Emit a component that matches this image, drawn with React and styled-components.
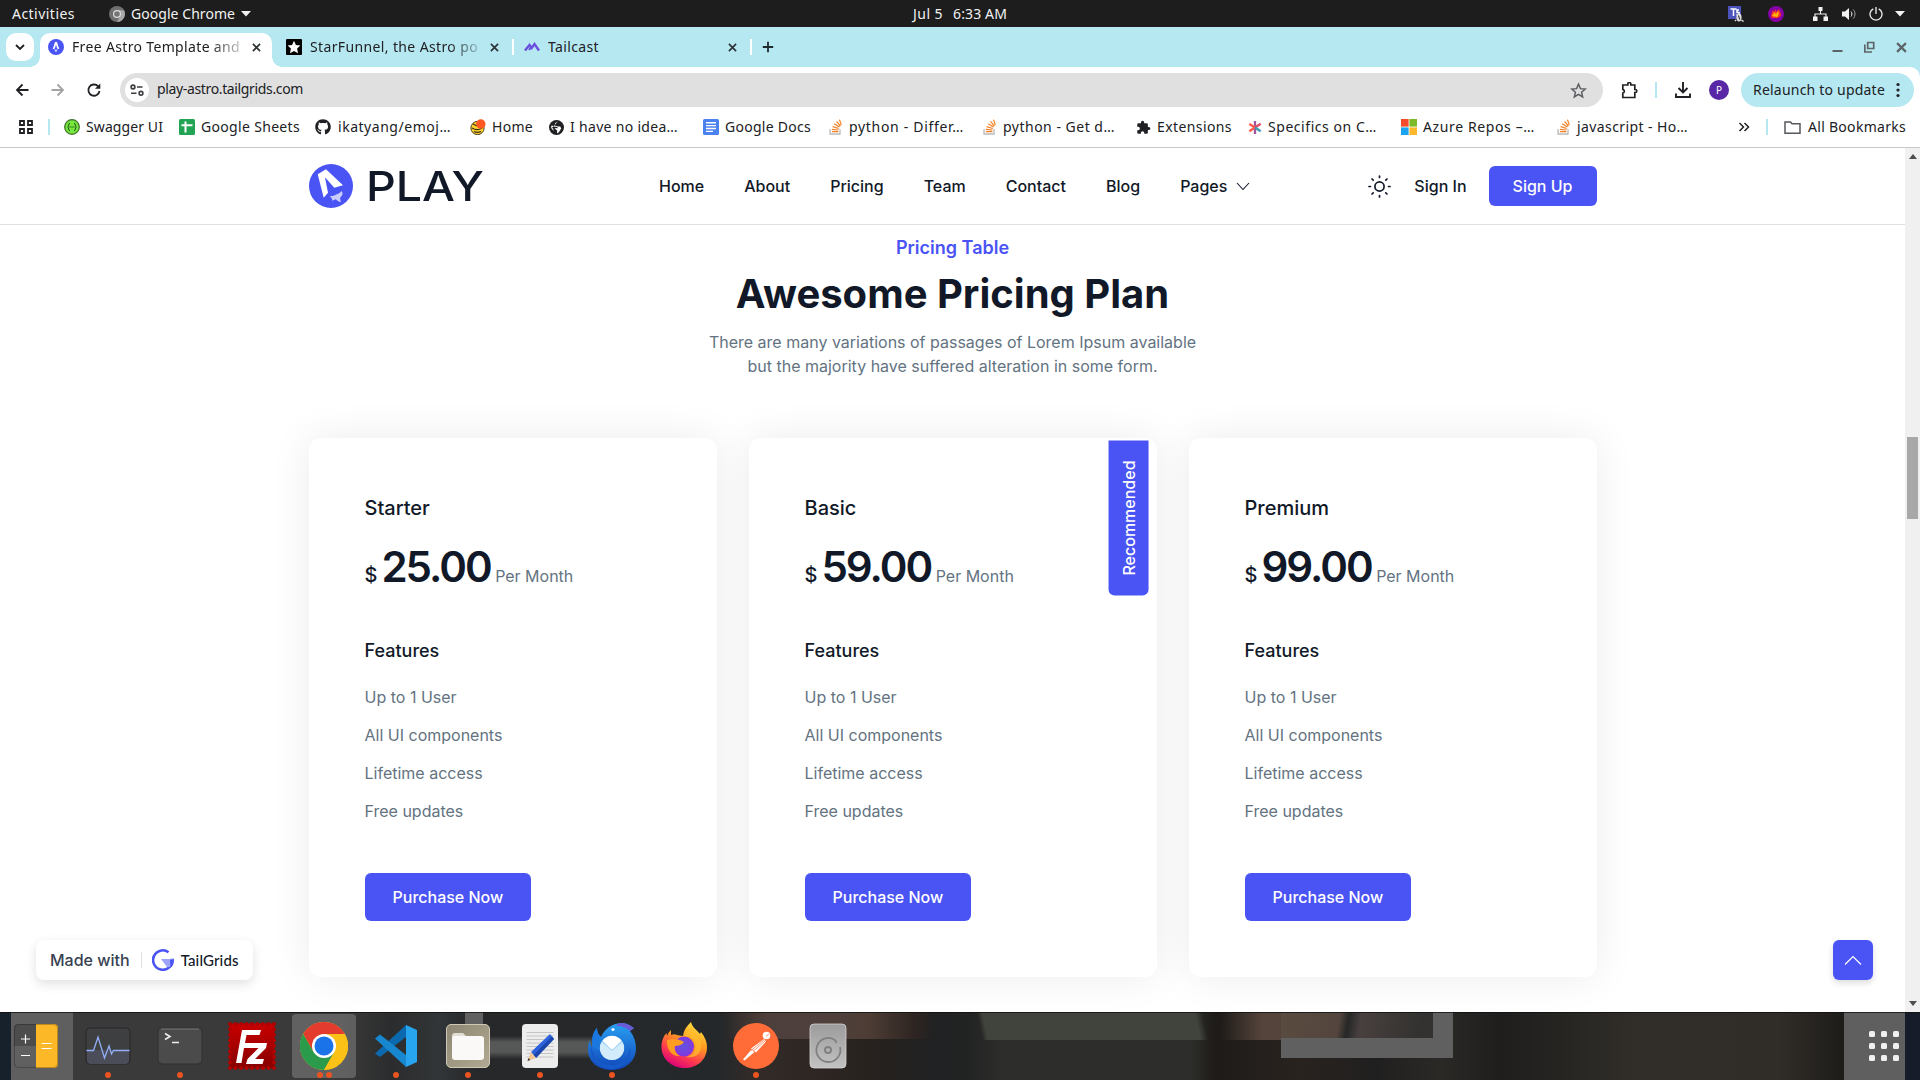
import React, { useLayoutEffect, useRef, useState } from "react";
import styled, { createGlobalStyle, css } from "styled-components";
import { FaGithub } from "react-icons/fa";

const GlobalStyle = createGlobalStyle`
  * { box-sizing: border-box; }
  html, body { margin: 0; padding: 0; overflow: hidden; background: #fff; }
  svg { display: block; flex: none; }
  button { font: inherit; border: 0; padding: 0; background: none; color: inherit; }
  h1, h2, h3, h4, p, ul { margin: 0; padding: 0; font-weight: inherit; }
  ul { list-style: none; }
`;

const uiFont = `"Noto Sans", "Open Sans", sans-serif`;
const pageFont = `Inter, "Liberation Sans", sans-serif`;
const primary = "#4a54f5";
const ink = "#111928";
const body = "#637381";

/* ---------- text that tracks itself to an exact width ---------- */
const TrackedText = styled.span`
  display: inline-block;
  white-space: pre;
  flex: none;
`;

function Tracked({ width, children, ...rest }) {
  const ref = useRef(null);
  const [spacing, setSpacing] = useState(0);
  useLayoutEffect(() => {
    const natural = ref.current.getBoundingClientRect().width;
    setSpacing((width - natural) / children.length);
  }, []);
  return (
    <TrackedText ref={ref} style={{ letterSpacing: `${spacing}px` }} {...rest}>
      {children}
    </TrackedText>
  );
}

const Screen = styled.div`
  width: 1920px;
  height: 1080px;
  display: flex;
  flex-direction: column;
  overflow: hidden;
  font-family: ${uiFont};
  font-size: 14px;
  color: #202124;
`;

/* ---------- desktop top bar ---------- */
const TopBar = styled.header`
  height: 27px;
  background: #1d1d1d;
  color: #f2f2f2;
  display: grid;
  grid-template-columns: 1fr auto 1fr;
  align-items: center;
  line-height: 27px;
`;
const TopLeft = styled.div`
  display: flex;
  align-items: center;
  padding-left: 12px;
`;
const TopCenter = styled.div`
  display: flex;
  gap: 10px;
`;
const TopRight = styled.div`
  display: flex;
  align-items: center;
  justify-content: flex-end;
  padding-right: 15px;
`;
const AppMenu = styled.div`
  display: flex;
  align-items: center;
  gap: 6px;
  margin-left: 34px;
`;
const Spacer = styled.div`
  width: ${(p) => p.$w}px;
  flex: none;
`;

/* ---------- browser chrome ---------- */
const TabStrip = styled.div`
  height: 40px;
  background: #b6e8f1;
  display: flex;
  align-items: flex-end;
  padding-left: 6px;
`;
const TabSearch = styled.button`
  width: 28px;
  height: 28px;
  border-radius: 10px;
  background: #fff;
  display: grid;
  place-items: center;
  margin: 0 6px 6px 0;
`;
const Tab = styled.div`
  width: ${(p) => p.$w}px;
  height: 34px;
  display: flex;
  align-items: center;
  padding: 0 0 6px ${(p) => p.$pad}px;
  gap: 8px;
  position: relative;
  ${(p) =>
    p.$active &&
    css`
      background: #fff;
      border-radius: 10px 10px 0 0;
      &::before,
      &::after {
        content: "";
        position: absolute;
        bottom: 0;
        width: 10px;
        height: 10px;
      }
      &::before {
        left: -10px;
        background: radial-gradient(circle at 0 0, transparent 9.5px, #fff 10px);
      }
      &::after {
        right: -10px;
        background: radial-gradient(circle at 100% 0, transparent 9.5px, #fff 10px);
      }
    `}
`;
const TabTitle = styled.div`
  width: 168px;
  overflow: hidden;
  white-space: nowrap;
  line-height: 20px;
  ${(p) => p.$fade && css`mask-image: linear-gradient(90deg, #000 82%, transparent 106%);`}
`;
const TabClose = styled.div`
  margin-left: 4px;
`;
const TabDivider = styled.div`
  width: 2px;
  height: 16px;
  background: #fff;
  margin-bottom: 12px;
`;
const NewTab = styled.div`
  margin: 0 0 14px 10px;
`;
const WindowButtons = styled.div`
  display: flex;
  align-items: center;
  gap: 21px;
  margin: 0 13px 14px auto;
`;
const ToolbarWrap = styled.div`
  background: #b6e8f1;
`;
const Toolbar = styled.div`
  height: 46px;
  background: #fff;
  border-radius: 0 10px 0 0;
  display: flex;
  align-items: center;
  padding: 0 6px 0 14px;
`;
const Omnibox = styled.div`
  width: 1483px;
  height: 34px;
  border-radius: 17px;
  background: #e0e0e0;
  display: flex;
  align-items: center;
  justify-content: space-between;
  padding: 0 16px 0 5px;
  margin-left: 18px;
`;
const OmniLeft = styled.div`
  display: flex;
  align-items: center;
  gap: 8px;
`;
const Url = styled.div`
  line-height: 20px;
  padding-bottom: 2px;
`;
const SiteInfo = styled.div`
  width: 24px;
  height: 24px;
  border-radius: 50%;
  background: #fff;
  display: grid;
  place-items: center;
`;
const ChromeDivider = styled.div`
  width: 2px;
  height: 16px;
  background: #b6e8f1;
  flex: none;
`;
const Avatar = styled.div`
  width: 20px;
  height: 20px;
  border-radius: 50%;
  background: #5827a6;
  color: #fff;
  font-size: 10px;
  line-height: 20px;
  text-align: center;
`;
const Relaunch = styled.button`
  width: 173px;
  height: 34px;
  border-radius: 17px;
  background: #b6e8f1;
  display: flex;
  align-items: center;
  justify-content: space-between;
  padding: 0 14px 1px 12px;
`;
const Bookmarks = styled.div`
  height: 35px;
  background: #fff;
  border-bottom: 1px solid #c9c9c9;
  display: flex;
  align-items: center;
  padding: 0 14px 6px 19px;
`;
const Bookmark = styled.div`
  width: ${(p) => p.$w}px;
  display: flex;
  align-items: center;
  gap: ${(p) => p.$gap ?? 6}px;
  flex: none;
  line-height: 20px;
`;

/* ---------- web page ---------- */
const Viewport = styled.div`
  height: 864px;
  display: flex;
  background: #fff;
  position: relative;
`;
const Page = styled.main`
  width: 1905px;
  height: 864px;
  overflow: hidden;
  font-family: ${pageFont};
  font-size: 16px;
  line-height: 24px;
  color: ${ink};
`;
const Scrollbar = styled.div`
  width: 15px;
  height: 864px;
  background: #f0f0f0;
  display: flex;
  flex-direction: column;
  align-items: center;
  padding: 6px 0;
`;
const Thumb = styled.div`
  width: 11px;
  height: 82px;
  background: #a8a8a8;
  margin: 278px 0 auto;
`;
const Nav = styled.nav`
  height: 77px;
  border-bottom: 1px solid #e0e1e3;
  padding: 0 308.5px;
  display: flex;
  align-items: center;
`;
const Logo = styled.div`
  display: flex;
  align-items: center;
  gap: 13px;
  width: 350.5px;
`;
const LogoWord = styled.div`
  font-family: Inter, sans-serif;
  font-size: 41.5px;
  font-weight: 500;
  line-height: 44px;
  transform: scaleX(1.12);
  transform-origin: 0 50%;
`;
const NavLinks = styled.ul`
  display: flex;
  gap: 40px;
  font-weight: 500;
`;
const NavLink = styled.li`
  display: flex;
  align-items: center;
  gap: 9px;
`;
const NavActions = styled.div`
  margin-left: auto;
  display: flex;
  align-items: center;
  font-weight: 500;
`;
const SignUp = styled.button`
  height: 40px;
  width: 108px;
  border-radius: 6px;
  background: ${primary};
  color: #fff;
  margin-left: 22px;
`;
const Intro = styled.section`
  text-align: center;
  padding-top: 9px;
  height: 213px;
`;
const Kicker = styled.p`
  font-size: 18px;
  line-height: 28px;
  font-weight: 600;
  color: ${primary};
  margin-bottom: 8px;
`;
const Title = styled.h2`
  font-size: 40px;
  line-height: 48px;
  font-weight: 700;
  margin-bottom: 12px;
`;
const Lead = styled.p`
  color: ${body};
  width: 510px;
  margin: 0 auto;
`;
const Plans = styled.section`
  display: flex;
  gap: 32px;
  padding: 0 308.5px;
`;
const Plan = styled.article`
  width: 408px;
  height: 539px;
  border-radius: 12px;
  background: #fff;
  padding: 56px;
  box-shadow: 0 0 40px rgba(0, 0, 0, 0.08);
  position: relative;
  overflow: hidden;
`;
const PlanName = styled.h3`
  font-size: 20px;
  line-height: 28px;
  font-weight: 500;
  margin-bottom: 20px;
`;
const Price = styled.div`
  font-size: 42px;
  font-weight: 600;
  line-height: 1.21;
  margin-bottom: 44px;
  white-space: nowrap;
`;
const Currency = styled.span`
  font-size: 20px;
  font-weight: 500;
`;
const Amount = styled.span`
  letter-spacing: -2px;
  margin-left: 4px;
`;
const Period = styled.span`
  font-size: 16px;
  font-weight: 400;
  color: ${body};
`;
const FeaturesTitle = styled.h4`
  font-size: 18px;
  line-height: 28px;
  font-weight: 500;
  margin-bottom: 20px;
`;
const Features = styled.ul`
  display: flex;
  flex-direction: column;
  gap: 14px;
  color: ${body};
  margin-bottom: 50px;
`;
const Purchase = styled.button`
  height: 48px;
  padding: 0 28px;
  border-radius: 6px;
  background: ${primary};
  color: #fff;
  font-weight: 500;
`;
const Ribbon = styled.p`
  position: absolute;
  right: -50px;
  top: 60px;
  padding: 8px 20px;
  border-radius: 6px 0 0 6px;
  background: ${primary};
  color: #fff;
  font-weight: 500;
  transform: rotate(-90deg);
`;
const MadeWith = styled.div`
  position: absolute;
  left: 36px;
  bottom: 32px;
  width: 217px;
  height: 40px;
  border-radius: 8px;
  background: #fff;
  box-shadow: 0 4px 12px rgba(0, 0, 0, 0.12);
  display: flex;
  align-items: center;
  padding-left: 14px;
  font-family: ${pageFont};
  font-size: 16px;
  font-weight: 500;
  color: #374151;
`;
const MadeDivider = styled.div`
  width: 1px;
  height: 16px;
  background: #dcdfe4;
  margin: 0 10px 0 11px;
`;
const Brand = styled.div`
  font-family: Lato, sans-serif;
  font-size: 15px;
  color: #111928;
  margin-left: 7px;
`;
const ScrollTop = styled.button`
  position: absolute;
  right: 47px;
  bottom: 32px;
  width: 40px;
  height: 40px;
  border-radius: 6px;
  background: ${primary};
  box-shadow: 0 3px 6px rgba(0, 0, 0, 0.14);
  display: grid;
  place-items: center;
`;

/* ---------- dock ---------- */
const layer = (color, x, y, w, h) =>
  `linear-gradient(${color}, ${color}) ${x}px ${y}px / ${w}px ${h}px no-repeat`;
const Dock = styled.footer`
  height: 68px;
  display: flex;
  align-items: stretch;
  position: relative;
  background:
    ${layer("rgba(15,15,15,.75)", 0, 0, 1920, 1)},
    ${layer("#17212c", 0, 0, 11, 68)},
    ${layer("#5f5f5f", 11, 0, 62, 68)},
    ${layer("#161c29", 1905, 0, 15, 68)},
    ${layer("#5f5f5f", 1844, 0, 61, 68)},
    ${layer("#616161", 465, 0, 18, 44)},
    linear-gradient(180deg, transparent, #565757 6px, #565757 16px, transparent) 483px 24px / 112px 23px no-repeat,
    ${layer("#606060", 1433, 0, 20, 46)},
    ${layer("#606060", 1281, 26, 172, 20)},
    linear-gradient(100deg, #5a4b40, #53453d 38%, #262727 44%, #48403f 52%, #333230 90%) 1281px 0 / 152px 26px no-repeat,
    linear-gradient(78deg, transparent 7%, #41433d 9%, #41433d 92%, transparent 95%) 965px 0 / 250px 28px no-repeat,
    linear-gradient(90deg, transparent, #55443c 70%, #55443c) 1221px 0 / 60px 28px no-repeat,
    linear-gradient(90deg, transparent, #4d3f3c 20%, #4f403c 50%, #4d3d35 68%, #2e2522 90%, transparent) 725px 0 / 210px 27px no-repeat,
    linear-gradient(90deg, #3a3a3a 0, #3a3a3a 345px, #2b2c2d 390px, #323537 440px, #26282a 475px, #25282a 720px, #332b28 755px, #28221f 870px, #202122 930px, #222323 970px, #2d2e2b 1000px, #2d2e2b 1190px, #1e1b19 1215px, #29231f 1300px, #201f1f 1375px, #2b2926 1440px, #1f1e1d 1500px, #312e29 1640px, #302d28 1780px, #1e1c1a 1844px);
`;
const DockApps = styled.div`
  display: flex;
`;
const DockItem = styled.div`
  width: 72px;
  height: 68px;
  display: grid;
  place-items: center;
  position: relative;
`;
const ActivePad = styled.div`
  position: absolute;
  inset: 2px 4px;
  border-radius: 4px;
  background: rgba(255, 255, 255, 0.2);
`;
const DockIcon = styled.div`
  position: relative;
`;
const Dots = styled.div`
  position: absolute;
  left: 0;
  right: 0;
  bottom: 2px;
  display: flex;
  justify-content: center;
  gap: 3px;
`;
const Dot = styled.i`
  width: 6px;
  height: 6px;
  border-radius: 50%;
  background: #e95420;
`;
const AppGrid = styled.div`
  margin-left: auto;
  padding: 19px 21px 0 0;
  display: grid;
  grid-template-columns: repeat(3, 6px);
  grid-auto-rows: 6px;
  gap: 6px;
  i {
    background: #f0f0f0;
    border-radius: 1.5px;
  }
`;

/* ---------- small icons ---------- */
const Caret = () => (
  <svg width="10" height="6" viewBox="0 0 10 6"><path d="M0 0h10L5 5.6z" fill="#f2f2f2" /></svg>
);
const CloseX = ({ s = 9, c = "#2b3236", w = 1.8 }) => (
  <svg width={s} height={s} viewBox="0 0 10 10"><path d="M1 1l8 8M9 1L1 9" stroke={c} strokeWidth={w} /></svg>
);
const ChromeMono = () => (
  <svg width="16" height="16" viewBox="0 0 16 16">
    <circle cx="8" cy="8" r="8" fill="#6f6f6f" />
    <path d="M8 4.2h7A8 8 0 0 1 8 16l3.4-6z" fill="#a8a8a8" />
    <circle cx="8" cy="8" r="4" fill="#ddd" /><circle cx="8" cy="8" r="2.8" fill="#747474" />
  </svg>
);
const AstroMark = () => (
  <svg width="16" height="16" viewBox="0 0 16 16">
    <circle cx="8" cy="8" r="8" fill={primary} />
    <path d="M7 3h2l2.3 7.2-2.2-.7L8 5.8 6.900 9.500l-2.200.7z" fill="#fff" />
    <path d="M6.400 10.600h3.200L8.700 12.400 8 13.200l-.8-.8z" fill="#c9ccff" />
  </svg>
);
const StarMark = () => (
  <svg width="16" height="16" viewBox="0 0 16 16">
    <rect width="16" height="16" rx="1" fill="#000" />
    <path d="M8 1.800l1.900 4.200 4.500.5-3.300 3.100.9 4.600L8 12l-4 2.200.9-4.600L1.600 6.500l4.500-.5z" fill="#fff" />
  </svg>
);
const TailcastMark = () => (
  <svg width="16" height="16" viewBox="0 0 16 16">
    <path d="M1 11.500L5.500 6l2.200 3L10.500 5l4.500 6.500" fill="none" stroke="#6c4fe0" strokeWidth="2.400" />
    <path d="M5 11l1.800-2.500" stroke="#6c4fe0" strokeWidth="2" />
  </svg>
);
const StackMark = () => (
  <svg width="14" height="16" viewBox="0 0 14 16">
    <path d="M1 10v5h10v-5" fill="none" stroke="#bcbbbb" strokeWidth="1.300" />
    <path d="M2.800 12.700h6.600M2.900 10.300l6.500.7M3.600 7.600l6.200 1.900M5.200 4.700l5.300 3.400M7.600 2.300l3.800 4.800M10.500.6l1.800 5.500" stroke="#f48024" strokeWidth="1.200" />
  </svg>
);
const SwaggerMark = () => (
  <svg width="16" height="16" viewBox="0 0 16 16">
    <circle cx="8" cy="8" r="7.300" fill="#76e83c" stroke="#3c6d28" strokeWidth="1.200" />
    <path d="M6 4.300c-2 0-.8 3-2.300 3.700C5.200 8.700 4 11.700 6 11.700M10 4.300c2 0 .8 3 2.300 3.700-1.500.7-.3 3.700-2.300 3.700" fill="none" stroke="#24521a" strokeWidth="1" />
    <path d="M5.500 8h5" stroke="#24521a" strokeWidth="1.100" strokeDasharray="1.300 .6" />
  </svg>
);
const SheetsMark = () => (
  <svg width="16" height="16" viewBox="0 0 16 16">
    <rect width="16" height="16" rx="1.500" fill="#23a455" />
    <path d="M6.500 2.500v11M2.500 6.300h11" stroke="#fff" strokeWidth="2" />
  </svg>
);
const HomeMark = () => (
  <svg width="16" height="16" viewBox="0 0 16 16">
    <circle cx="7.500" cy="9" r="6.600" fill="#ffd42a" stroke="#4b3b1c" />
    <path d="M2 9c3 2 7 2 10 0M4 12.500c2 1 5 1 7 0M3 5l4 2" stroke="#3d3020" strokeWidth="1.300" fill="none" />
    <circle cx="10.800" cy="5" r="4.700" fill="#ff5722" />
  </svg>
);
const GlobeMark = () => (
  <svg width="15" height="15" viewBox="0 0 16 16">
    <circle cx="8" cy="8" r="8" fill="#202124" />
    <path d="M9.500 1.600L6.500 3.500 6 5.800l3.500 1 2.500.2 1 2-2.500 4-2 1.500.2-3.200L7 9.800 6 8.600l3.400.2L8.800 7.400 5 6.800 3 5.500 2 8l2.500 1 .5 2.500L2.500 9z" fill="#fff" />
  </svg>
);
const DocsMark = () => (
  <svg width="16" height="16" viewBox="0 0 16 16">
    <rect width="16" height="16" rx="1.500" fill="#4c82f0" />
    <path d="M3 3.700h10M3 6.600h10M3 9.500h10M3 12.400h7" stroke="#fff" strokeWidth="1.400" />
  </svg>
);
const PuzzleMark = () => (
  <svg width="15" height="15" viewBox="0 0 24 24">
    <path d="M20.500 11H19V7a2 2 0 0 0-2-2h-4V3.500a2.500 2.500 0 0 0-5 0V5H4a2 2 0 0 0-2 2v3.800h1.500a2.700 2.700 0 0 1 0 5.400H2V20a2 2 0 0 0 2 2h3.800v-1.500a2.700 2.700 0 0 1 5.400 0V22H17a2 2 0 0 0 2-2v-4h1.500a2.500 2.500 0 0 0 0-5z" fill="#202124" />
  </svg>
);
const AsteriskMark = () => (
  <svg width="14" height="15" viewBox="0 0 14 15">
    <path d="M7 7.500V1M7 7.500V14" stroke="#a1549b" strokeWidth="2.300" />
    <path d="M7 7.500L1.300 4M7 7.500l-5.700 3.800" stroke="#ff5a4a" strokeWidth="2.300" />
    <path d="M7 7.500l5.700-3.800" stroke="#ea4d69" strokeWidth="2.300" /><path d="M7 7.500l5.700 3.800" stroke="#3c9bb0" strokeWidth="2.300" />
  </svg>
);
const MicrosoftMark = () => (
  <svg width="16" height="16" viewBox="0 0 16 16">
    <path fill="#f7492c" d="M0 0h7.600v7.600H0z" /><path fill="#7cbb27" d="M8.400 0H16v7.600H8.400z" />
    <path fill="#1aa3ee" d="M0 8.400h7.600V16H0z" /><path fill="#fdb92c" d="M8.400 8.400H16V16H8.400z" />
  </svg>
);
const Arrow = ({ flip, c }) => (
  <svg width="16" height="16" viewBox="0 0 16 16" transform={flip ? "scale(-1 1)" : undefined}>
    <path d="M14.500 8H3.500M8.500 2.500L3 8l5.500 5.500" fill="none" stroke={c} strokeWidth="1.800" />
  </svg>
);

const bookmarks = [
  { icon: <SwaggerMark />, text: "Swagger UI", w: 115, t: 77 },
  { icon: <SheetsMark />, text: "Google Sheets", w: 136, t: 99 },
  { icon: <FaGithub size={16} color="#202124" />, text: "ikatyang/emoj…", w: 155, t: 113, gap: 7 },
  { icon: <HomeMark />, text: "Home", w: 79, t: 41 },
  { icon: <GlobeMark />, text: "I have no idea…", w: 154, t: 108, gap: 6 },
  { icon: <DocsMark />, text: "Google Docs", w: 126, t: 86 },
  { icon: <StackMark />, text: "python - Differ…", w: 154, t: 115 },
  { icon: <StackMark />, text: "python - Get d…", w: 153, t: 112 },
  { icon: <PuzzleMark />, text: "Extensions", w: 112, t: 75 },
  { icon: <AsteriskMark />, text: "Specifics on C…", w: 153, t: 109 },
  { icon: <MicrosoftMark />, text: "Azure Repos –…", w: 156, t: 112 },
  { icon: <StackMark />, text: "javascript - Ho…", w: 181, t: 111 },
];

/* ---------- dock icons ---------- */
const CalcIcon = () => (
  <svg width="44" height="44" viewBox="0 0 44 44">
    <rect width="44" height="44" rx="4" fill="#4c4c4c" />
    <path d="M0 22h22v22H4a4 4 0 0 1-4-4z" fill="#606060" />
    <path d="M22 0h18a4 4 0 0 1 4 4v36a4 4 0 0 1-4 4H22z" fill="#fdb827" />
    <path d="M7 15h9M11.500 10.500v9M7 31.500h9M27.500 19.500h10M27.500 24.500h10" stroke="#fff" strokeWidth="1.200" />
    <rect x=".5" y=".5" width="43" height="43" rx="4" fill="none" stroke="#000" strokeOpacity=".25" />
  </svg>
);
const MonitorIcon = () => (
  <svg width="46" height="38" viewBox="0 0 46 38">
    <rect x="1" y="1" width="44" height="36" rx="4" fill="#3e3f41" stroke="#26272a" />
    <path d="M2 23h42v10a4 4 0 0 1-4 4H6a4 4 0 0 1-4-4z" fill="#4b4d58" />
    <path d="M1.500 23.500h7L13 10l6.500 21L24 19l2.500 8 2-3.500H44.500" fill="none" stroke="#92b0f7" strokeWidth="1.300" />
  </svg>
);
const TerminalIcon = () => (
  <svg width="46" height="38" viewBox="0 0 46 38">
    <rect x="1" y="1" width="44" height="36" rx="4" fill="#4b4b4b" stroke="#303030" />
    <path d="M4 2h38" stroke="#767676" />
    <path d="M8 6.500l5 3-5 3M15 15.500h7" fill="none" stroke="#eee" strokeWidth="1.600" />
  </svg>
);
const FileZillaIcon = () => (
  <svg width="48" height="48" viewBox="0 0 48 48">
    <defs><linearGradient id="fz" x2="0" y2="1"><stop stopColor="#c90000" /><stop offset="1" stopColor="#850000" /></linearGradient></defs>
    <rect x="1.500" y="1.500" width="45" height="45" fill="url(#fz)" />
    <rect x="2" y="2" width="44" height="44" fill="none" stroke="#b00000" strokeWidth="4" strokeDasharray="0 5.500" strokeLinecap="round" />
    <path d="M14 8h19l-1.500 5H18.500l-1.500 8h9l-1 5h-9l-2.500 15H8z" fill="#fff" />
    <path d="M24 21h15l-1 5-11 11h9l-1.500 5H18l1.500-5 11-11h-7.500z" fill="#fff" />
  </svg>
);
const ChromeIcon = () => (
  <svg width="48" height="48" viewBox="0 0 48 48">
    <circle cx="24" cy="24" r="24" fill="#fbc116" />
    <path d="M3.200 12A24 24 0 0 1 44.800 12L24 12.500 13.600 30z" fill="#e33b2e" />
    <path d="M3.200 12A24 24 0 0 0 24 48L34.400 30 24 35 13.600 30z" fill="#2a9a4b" />
    <path d="M24 12h20.800A24 24 0 0 1 24 48L34.400 30z" fill="#fbc116" />
    <circle cx="24" cy="24" r="12" fill="#fff" /><circle cx="24" cy="24" r="9.500" fill="#1a73e8" />
  </svg>
);
const CodeIcon = () => (
  <svg width="42" height="42" viewBox="0 0 42 42">
    <path d="M0 28.500L31 0v12L5 32z" fill="#0b69b0" />
    <path d="M0 13.500L5 9.500l26 20.500v12z" fill="#1787cf" />
    <path d="M31 0L42 5v32l-11 5z" fill="#27a5ef" />
  </svg>
);
const FilesIcon = () => (
  <svg width="44" height="44" viewBox="0 0 44 44">
    <defs><linearGradient id="fl" x2="1" y2="1"><stop stopColor="#8d8672" /><stop offset="1" stopColor="#b1a993" /></linearGradient></defs>
    <rect x=".5" y=".5" width="43" height="43" rx="4.500" fill="url(#fl)" stroke="#cfc8b4" />
    <path d="M6 12a3 3 0 0 1 3-3h8l4 4h14a3 3 0 0 1 3 3v16H6z" fill="#e1ded5" />
    <rect x="6" y="12" width="32" height="24" rx="3" fill="#faf9f7" />
  </svg>
);
const EditorIcon = () => (
  <svg width="44" height="44" viewBox="0 0 44 44">
    <rect x="4" width="36" height="44" rx="4" fill="#ededed" />
    <path d="M8.500 8.500h27M8.500 12h27M8.500 15.500h27M8.500 19h27M8.500 22.500h27M8.500 26h27M8.500 29.500h27M8.500 33h27" stroke="#c4c4c4" />
    <path d="M32 10l4 5-18 19-5-6z" fill="#2d62dc" /><path d="M34 12.500l2 2.500-18 19-2.500-3z" fill="#1c46ab" />
    <path d="M13 28l5 6-8.500 3z" fill="#f2c595" /><path d="M10.500 34l1.800 2-2.800 1z" fill="#333" />
  </svg>
);
const ThunderbirdIcon = () => (
  <svg width="48" height="48" viewBox="0 0 48 48">
    <defs><linearGradient id="tb" x2="0" y2="1"><stop stopColor="#2aa0f2" /><stop offset="1" stopColor="#1046b8" /></linearGradient></defs>
    <path d="M9 6c0 5 2 7 4 9C17 6 24 2 33 1c6 0 10 3 13 5l-4 3c4 5 6 11 6 18A23.500 21 0 0 1 24 48C10 48 0 40 0 27c0-4 1-7 2-9 0 4 1 6 2 7 0-8 1-15 5-19z" fill="url(#tb)" />
    <path d="M9 6c0 5 2 7 4 9-3 6-3 9-1 13-5-1-8-4-8-8 0-5 1-10 5-14z" fill="#1b78e0" />
    <path d="M3 24c3 12 9 18 20 19 11 0 17-7 19-17 3 12-8 21-18 21C11 47 1 38 3 24z" fill="#155ac8" />
    <path d="M33 1c6 0 10 3 13 5l-4 3c-3-3-8-5-14-5 1-2 3-3 5-3z" fill="#6a5ad8" />
    <circle cx="24" cy="26" r="12" fill="#a8d8f8" />
    <path d="M14.500 18.500A12 12 0 0 1 33.500 18.500L25.500 26.500q-1.500 1-3 0z" fill="#fff" />
    <path d="M13.500 20l9 8q1.500 1 3 0l9-8A12 12 0 0 1 24 38 12 12 0 0 1 13.500 20z" fill="#d3ecfc" />
    <circle cx="25" cy="7.500" r="1.600" fill="#eaf6ff" />
  </svg>
);
const FirefoxIcon = () => (
  <svg width="48" height="48" viewBox="0 0 48 48">
    <defs>
      <linearGradient id="ff" x1=".8" y1="0" x2=".3" y2="1"><stop stopColor="#ffe945" /><stop offset=".4" stopColor="#ff9a20" /><stop offset=".72" stopColor="#ff3b4e" /><stop offset="1" stopColor="#d8007d" /></linearGradient>
      <radialGradient id="fx"><stop stopColor="#6252e0" /><stop offset="1" stopColor="#8138dd" /></radialGradient>
    </defs>
    <path d="M31 0c1 5 6 8 9 12l1-2c4 5 6 10 6 15C47 38 37 46 24.500 46S1.500 37 1.500 25c0-6 2-11 5-14l.5 3c1-3 3-5 4-6v5c2-1 4-1 6 0 1 0 4 1 6 1 1-7 5-11 8-14z" fill="url(#ff)" />
    <circle cx="24" cy="24.500" r="10" fill="url(#fx)" />
    <path d="M7 18c5-2 13-1 17 2-2 3-6 4-9 4-1 4 1 8 5 10-8 1-14-7-13-16z" fill="#ff9c22" />
    <path d="M24 14c6-1 11 4 11 10s-4 10-9 11c10 2 17-5 15-14-2-8-9-8-9-15-5 3-6 5-8 8z" fill="#ffbc2b" fillOpacity=".75" />
  </svg>
);
const PostmanIcon = () => (
  <svg width="48" height="48" viewBox="0 0 48 48">
    <circle cx="24" cy="24" r="23" fill="#ff6c37" />
    <circle cx="34.500" cy="13.500" r="3.800" fill="#fff" />
    <path d="M32 17l2 2.500-10 11-5-4z" fill="#fff" /><path d="M19.500 27.500l3 2.500-10 8.500-1.500-1z" fill="#fff" />
    <path d="M19 28.500L32 18M21 29.500l12-10.500M34 14l3-2" stroke="#ff6c37" strokeWidth=".7" />
  </svg>
);
const DiskIcon = () => (
  <svg width="48" height="48" viewBox="0 0 48 48">
    <defs><linearGradient id="dk" x2="0" y2="1"><stop stopColor="#9c9c9c" /><stop offset="1" stopColor="#c2c2c2" /></linearGradient></defs>
    <rect x="6" y="2" width="36" height="44" rx="4" fill="url(#dk)" stroke="#d5d5d5" strokeWidth=".8" />
    <path d="M31 18A12 12 0 1 0 36 25M31 18l1.500 3" fill="none" stroke="#808080" strokeWidth="1.800" />
    <circle cx="24" cy="28" r="3" fill="none" stroke="#808080" strokeWidth="2" />
  </svg>
);

const dockApps = [
  { icon: <CalcIcon />, dots: 0 },
  { icon: <MonitorIcon />, dots: 1 },
  { icon: <TerminalIcon />, dots: 1 },
  { icon: <FileZillaIcon />, dots: 0 },
  { icon: <ChromeIcon />, dots: 2, active: true },
  { icon: <CodeIcon />, dots: 1 },
  { icon: <FilesIcon />, dots: 1 },
  { icon: <EditorIcon />, dots: 1 },
  { icon: <ThunderbirdIcon />, dots: 1 },
  { icon: <FirefoxIcon />, dots: 0 },
  { icon: <PostmanIcon />, dots: 1 },
  { icon: <DiskIcon />, dots: 0 },
];

const plans = [
  { name: "Starter", price: "25.00" },
  { name: "Basic", price: "59.00", recommended: true },
  { name: "Premium", price: "99.00" },
];
const features = ["Up to 1 User", "All UI components", "Lifetime access", "Free updates"];

function DesktopBar() {
  return (
    <TopBar>
      <TopLeft>
        <Tracked width={63}>Activities</Tracked>
        <AppMenu>
          <ChromeMono />
          <Tracked width={104}>Google Chrome</Tracked>
          <Caret />
        </AppMenu>
      </TopLeft>
      <TopCenter>
        <Tracked width={30}>Jul 5</Tracked>
        <Tracked width={54}>6:33 AM</Tracked>
      </TopCenter>
      <TopRight>
        <svg width="16" height="16" viewBox="0 0 16 16">
          <rect width="13" height="13" fill="#4b53bc" /><path d="M2.500 3h6M5.500 3v7M11 4H9v2.500h2V9H8.500" stroke="#fff" strokeWidth="1.500" fill="none" />
          <ellipse cx="11" cy="11.500" rx="2.600" ry="4" fill="#ddd" /><path d="M8 15l-1-1M15.500 15.500l-2-1.500" stroke="#ddd" strokeWidth="1.500" /><path d="M10.500 9.500l1.200 4" stroke="#222" />
        </svg>
        <Spacer $w={24} />
        <svg width="16" height="16" viewBox="0 0 16 16">
          <circle cx="8" cy="8" r="8" fill="#8500a5" /><path d="M3 11c0-3 1-5 2-7l1 2 2-3v3l3-3c0 2 2 3 2 5 0 3-2 4-5 4s-4 0-5-1z" fill="#f5362c" />
          <path d="M4 10c1-2 2-2 2-4l2 2 2-3c1 3 1 5-1 6z" fill="#ffb400" />
        </svg>
        <Spacer $w={29} />
        <svg width="15" height="14" viewBox="0 0 15 14">
          <path d="M5.500 0h4v4h-4zM0 9.500h4.500V14H0zM10.500 9.500H15V14h-4.500z" fill="#f2f2f2" /><path d="M7.500 4v3M2 10V7h11v3" stroke="#f2f2f2" strokeWidth="1.100" fill="none" />
        </svg>
        <Spacer $w={14} />
        <svg width="15" height="14" viewBox="0 0 15 14">
          <path d="M0 4.500h3L7 1v12L3 9.500H0z" fill="#f2f2f2" /><path d="M9 4.500c1.200 1.500 1.200 3.500 0 5" stroke="#f2f2f2" fill="none" /><path d="M11.200 2.500c2.400 2.500 2.400 6.500 0 9" stroke="#aaa" fill="none" />
        </svg>
        <Spacer $w={12} />
        <svg width="14" height="14" viewBox="0 0 14 14">
          <path d="M4.300 1.800a6 6 0 1 0 5.400 0M7 0v7" stroke="#f2f2f2" strokeWidth="1.300" fill="none" />
        </svg>
        <Spacer $w={12} />
        <Caret />
      </TopRight>
    </TopBar>
  );
}

function BrowserChrome() {
  return (
    <>
      <TabStrip>
        <TabSearch>
          <svg width="10" height="7" viewBox="0 0 10 7"><path d="M1 1l4 4 4-4" fill="none" stroke="#202124" strokeWidth="1.800" /></svg>
        </TabSearch>
        <Tab $active $w={232} $pad={8}>
          <AstroMark />
          <TabTitle $fade><Tracked width={168}>Free Astro Template and</Tracked></TabTitle>
          <TabClose><CloseX /></TabClose>
        </Tab>
        <Tab $w={240} $pad={14}>
          <StarMark />
          <TabTitle $fade><Tracked width={168}>StarFunnel, the Astro po</Tracked></TabTitle>
          <TabClose><CloseX /></TabClose>
        </Tab>
        <TabDivider />
        <Tab $w={236} $pad={10}>
          <TailcastMark />
          <TabTitle><Tracked width={51}>Tailcast</Tracked></TabTitle>
          <TabClose><CloseX /></TabClose>
        </Tab>
        <TabDivider />
        <NewTab>
          <svg width="12" height="12" viewBox="0 0 12 12"><path d="M6 .8v10.400M.8 6h10.400" stroke="#202b30" strokeWidth="1.800" /></svg>
        </NewTab>
        <WindowButtons>
          <svg width="11" height="12" viewBox="0 0 11 12"><path d="M.5 10h10" stroke="#5c6468" strokeWidth="2" /></svg>
          <svg width="11" height="12" viewBox="0 0 11 12"><path d="M3.700 1.500h6v6h-6zM.8 3.500V11H8" fill="none" stroke="#5c6468" strokeWidth="1.700" /></svg>
          <CloseX s={11} c="#5c6468" w={2} />
        </WindowButtons>
      </TabStrip>
      <ToolbarWrap>
        <Toolbar>
          <Arrow c="#202124" />
          <Spacer $w={20} />
          <Arrow flip c="#a3a3a3" />
          <Spacer $w={20} />
          <svg width="16" height="16" viewBox="0 0 16 16">
            <path d="M13.500 9A5.600 5.600 0 1 1 12 4.200l1.500 1.300" fill="none" stroke="#202124" strokeWidth="1.800" /><path d="M14.300 1.500v5.300H9z" fill="#202124" />
          </svg>
          <Omnibox>
            <OmniLeft>
              <SiteInfo>
                <svg width="14" height="12" viewBox="0 0 14 12"><g fill="none" stroke="#3b3d40" strokeWidth="1.600"><circle cx="3" cy="3" r="1.900" /><path d="M7 3h5.500M1 9.300h5.500" /><circle cx="11" cy="9.300" r="1.900" /></g></svg>
              </SiteInfo>
              <Url><Tracked width={146}>play-astro.tailgrids.com</Tracked></Url>
            </OmniLeft>
            <svg width="17" height="17" viewBox="0 0 24 24"><path d="M12 3l2.700 6.300 6.800.6-5.200 4.500 1.600 6.700L12 17.500l-5.900 3.600 1.600-6.700-5.200-4.500 6.800-.6z" fill="none" stroke="#5a5c60" strokeWidth="2" /></svg>
          </Omnibox>
          <Spacer $w={18} />
          <svg width="17" height="17" viewBox="0 0 17 17">
            <path d="M1.800 3h5V2a1.500 1.500 0 0 1 3 0v1h4v4.500h.5a1.500 1.500 0 0 1 0 3h-.5V15.500h-12v-4.300a2 2 0 0 0 0-3.900z" fill="none" stroke="#202124" strokeWidth="1.700" />
          </svg>
          <Spacer $w={17} />
          <ChromeDivider />
          <Spacer $w={18} />
          <svg width="16" height="16" viewBox="0 0 16 16"><path d="M8 0v10M3.500 6L8 10.500 12.500 6M1 11.500V15h14v-3.500" fill="none" stroke="#202124" strokeWidth="1.900" /></svg>
          <Spacer $w={18} />
          <Avatar>P</Avatar>
          <Spacer $w={12} />
          <Relaunch>
            <Tracked width={132}>Relaunch to update</Tracked>
            <svg width="4" height="16" viewBox="0 0 4 16" fill="#202124"><circle cx="2" cy="2.500" r="1.600" /><circle cx="2" cy="8" r="1.600" /><circle cx="2" cy="13.500" r="1.600" /></svg>
          </Relaunch>
        </Toolbar>
      </ToolbarWrap>
      <Bookmarks>
        <svg width="14" height="14" viewBox="0 0 14 14"><path d="M1 1h4v4H1zM9 1h4v4H9zM1 9h4v4H1zM9 9h4v4H9z" fill="none" stroke="#202124" strokeWidth="1.800" /></svg>
        <Spacer $w={15} />
        <ChromeDivider />
        <Spacer $w={14} />
        {bookmarks.map((b) => (
          <Bookmark key={b.text} $w={b.w} $gap={b.gap}>
            {b.icon}
            <Tracked width={b.t}>{b.text}</Tracked>
          </Bookmark>
        ))}
        <svg width="12" height="10" viewBox="0 0 12 10"><path d="M1.500 1l4 4-4 4M6.500 1l4 4-4 4" fill="none" stroke="#202124" strokeWidth="1.500" /></svg>
        <Spacer $w={16} />
        <ChromeDivider />
        <Spacer $w={16} />
        <Bookmark $w={122} $gap={7}>
          <svg width="17" height="13" viewBox="0 0 17 13"><path d="M1 1h5.500L8 2.800h8V12.200H1z" fill="none" stroke="#55585c" strokeWidth="1.500" /></svg>
          <Tracked width={98}>All Bookmarks</Tracked>
        </Bookmark>
      </Bookmarks>
    </>
  );
}

function PlanCard({ name, price, recommended }) {
  return (
    <Plan>
      {recommended && <Ribbon>Recommended</Ribbon>}
      <PlanName>{name}</PlanName>
      <Price>
        <Currency>$</Currency>
        <Amount>{price}</Amount>
        <Period> Per Month</Period>
      </Price>
      <FeaturesTitle>Features</FeaturesTitle>
      <Features>
        {features.map((f) => <li key={f}>{f}</li>)}
      </Features>
      <Purchase>Purchase Now</Purchase>
    </Plan>
  );
}

function WebPage() {
  return (
    <Viewport>
      <Page>
        <Nav>
          <Logo>
            <svg width="44" height="44" viewBox="0 0 44 44">
              <circle cx="22" cy="22" r="22" fill={primary} />
              <path d="M8.700 10.300L17 5.300 34 21.300l-8.700 2.400L16 13.300l3 15.400-4.300 5z" fill="#fff" />
              <path d="M20.700 32c3 .3 5-.3 7-1.700 2-.8 3.700-1.800 5-3.300.8 1.300 1 2.700.6 4-.7 1-1.500 2-2.300 3 .4 1.300.6 2.700.7 4.300-2-.5-3.300-1.800-5-3-1.200.5-2 .8-3.400 1.400-.2-2-.9-3.200-2.600-4.700z" fill="#fff" fillOpacity=".7" />
            </svg>
            <LogoWord>PLAY</LogoWord>
          </Logo>
          <NavLinks>
            {["Home", "About", "Pricing", "Team", "Contact", "Blog"].map((l) => <NavLink key={l}>{l}</NavLink>)}
            <NavLink>
              Pages
              <svg width="14" height="9" viewBox="0 0 14 9"><path d="M1 1l6 6.500L13 1" fill="none" stroke={ink} strokeWidth="1.100" /></svg>
            </NavLink>
          </NavLinks>
          <NavActions>
            <svg width="23" height="23" viewBox="0 0 23 23" fill="none" stroke={ink} strokeWidth="1.700" strokeLinecap="round">
              <circle cx="11.500" cy="11.500" r="4.600" />
              <path d="M11.500 1v1.500M11.500 20.500V22M1 11.500h1.500M20.500 11.500H22M4 4l1.200 1.200M17.800 17.800L19 19M4 19l1.200-1.200M17.800 5.200L19 4" />
            </svg>
            <Spacer $w={23} />
            <span>Sign In</span>
            <SignUp>Sign Up</SignUp>
          </NavActions>
        </Nav>
        <Intro>
          <Kicker>Pricing Table</Kicker>
          <Title>Awesome Pricing Plan</Title>
          <Lead>There are many variations of passages of Lorem Ipsum available but the majority have suffered alteration in some form.</Lead>
        </Intro>
        <Plans>
          {plans.map((p) => <PlanCard key={p.name} {...p} />)}
        </Plans>
      </Page>
      <Scrollbar>
        <svg width="8" height="5" viewBox="0 0 8 5"><path d="M0 5l4-5 4 5z" fill="#4d4d4d" /></svg>
        <Thumb />
        <svg width="8" height="5" viewBox="0 0 8 5"><path d="M0 0l4 5 4-5z" fill="#4d4d4d" /></svg>
      </Scrollbar>
      <MadeWith>
        <span>Made with</span>
        <MadeDivider />
        <svg width="22" height="22" viewBox="0 0 22 22">
          <path d="M16.500 3.200A9.700 9.700 0 1 0 20.500 11H18" fill="none" stroke={primary} strokeWidth="2.600" />
          <path d="M9 10h13v2h-3v5.500l-3.500 1z" fill="#9da3fa" /><path d="M22 10c0 4-1 7-3.500 9L18 11z" fill={primary} />
        </svg>
        <Brand><Tracked width={58}>TailGrids</Tracked></Brand>
      </MadeWith>
      <ScrollTop>
        <svg width="18" height="11" viewBox="0 0 18 11"><path d="M1 9.500L9 1.500l8 8" fill="none" stroke="#fff" strokeWidth="1.200" /></svg>
      </ScrollTop>
    </Viewport>
  );
}

export default function App() {
  return (
    <>
      <GlobalStyle />
      <Screen>
        <DesktopBar />
        <BrowserChrome />
        <WebPage />
        <Dock>
          <DockApps>
            {dockApps.map((app, i) => (
              <DockItem key={i}>
                {app.active && <ActivePad />}
                <DockIcon>{app.icon}</DockIcon>
                <Dots>{Array.from({ length: app.dots }, (_, d) => <Dot key={d} />)}</Dots>
              </DockItem>
            ))}
          </DockApps>
          <AppGrid>{Array.from({ length: 9 }, (_, i) => <i key={i} />)}</AppGrid>
        </Dock>
      </Screen>
    </>
  );
}
